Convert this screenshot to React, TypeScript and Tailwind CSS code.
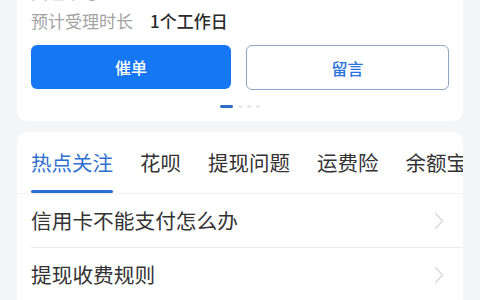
import React from "react";

const font = { fontFamily: '"Noto Sans CJK SC", "Noto Sans", sans-serif' };

function Chevron() {
  return (
    <svg width="10" height="18" viewBox="0 0 10 18" fill="none">
      <path d="M1.5 1.5 L8.5 9 L1.5 16.5" stroke="#d8d8d8" strokeWidth="1.3" strokeLinecap="round" strokeLinejoin="round" />
    </svg>
  );
}

export default function App() {
  const tabs = ["热点关注", "花呗", "提现问题", "运费险", "余额宝"];
  const rows = ["信用卡不能支付怎么办", "提现收费规则"];
  return (
    <div className="w-[480px] h-[300px] overflow-hidden bg-[#f4f5f7] px-[17px]" style={font}>
      <div className="-mt-[24px] bg-white rounded-b-[10px] px-[14px] pt-[4px] pb-[13px]">
        <div className="flex items-center h-[24px] text-[17px] leading-[24px] text-[#aaaaaa] whitespace-nowrap">
          <span>受理单号</span>
          <span className="ml-[17px] text-[#999]">2019091820001</span>
        </div>
        <div className="mt-[5px] flex items-center h-[24px] text-[17px] leading-[24px] whitespace-nowrap">
          <span className="text-[#a3a3a3]">预计受理时长</span>
          <span className="ml-[17px] text-[#2b2b2b] font-medium">1个工作日</span>
        </div>
        <div className="mt-[12px] flex justify-between">
          <div className="w-[200px] h-[44px] rounded-[6px] bg-[#1677f5] flex items-center justify-center text-white text-[16px] font-medium">
            催单
          </div>
          <div className="w-[203px] h-[45px] rounded-[6px] border-[1.5px] border-[#8fa3c4] bg-white flex items-center justify-center text-[#2a73dd] text-[16px] font-medium">
            留言
          </div>
        </div>
        <div className="mt-[15px] flex items-center justify-center gap-[5px]">
          <div className="w-[13px] h-[3px] rounded-full bg-[#2b6cc4]" />
          <div className="w-[4px] h-[3px] rounded-full bg-[#e6e8ec]" />
          <div className="w-[4px] h-[3px] rounded-full bg-[#e6e8ec]" />
          <div className="w-[4px] h-[3px] rounded-full bg-[#e6e8ec]" />
        </div>
      </div>

      <div className="mt-[11px] bg-white rounded-t-[10px] overflow-hidden">
        <div className="flex gap-[27px] pl-[14px] pt-[16px] whitespace-nowrap">
          {tabs.map((t, i) => (
            <div key={t} className="flex flex-col items-stretch shrink-0">
              <span className={`text-[20.5px] leading-[28px] ${i === 0 ? "text-[#2f6fcf]" : "text-[#333]"}`}>{t}</span>
              <div className={`mt-[14px] h-[3px] rounded-full ${i === 0 ? "bg-[#2a6fd6]" : "bg-transparent"}`} />
            </div>
          ))}
        </div>
        <div className="h-px bg-[#f0f0f0]" />
        {rows.map((r, i) => (
          <div key={r} className="pl-[14px]">
            <div className={`flex items-center justify-between h-[54px] pr-[19px] ${i === 0 ? "border-b border-[#ececec]" : ""}`}>
              <span className="text-[20.7px] text-[#333]">{r}</span>
              <Chevron />
            </div>
          </div>
        ))}
      </div>
    </div>
  );
}
